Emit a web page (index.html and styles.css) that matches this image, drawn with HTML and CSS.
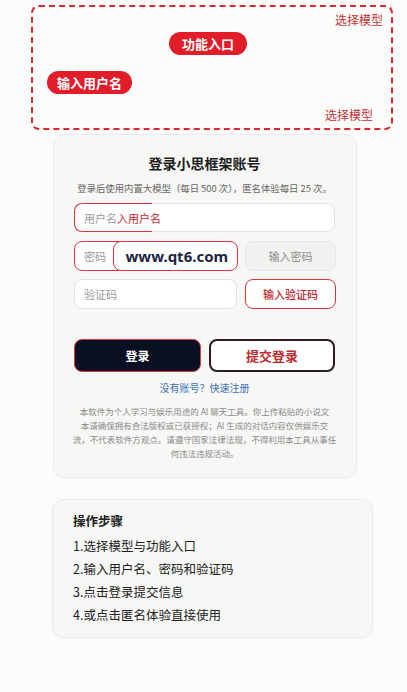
FILE: index.html
```html
<!DOCTYPE html>
<html lang="zh-CN">
<head>
<meta charset="utf-8">
<title>登录小思框架账号</title>
<link rel="stylesheet" href="styles.css">
</head>
<body>
<div class="page">
  <div class="hint-box">
    <span class="hint-label top">选择模型</span>
    <span class="pill pill-center">功能入口</span>
    <span class="pill pill-left">输入用户名</span>
    <span class="hint-label bottom">选择模型</span>
  </div>

  <div class="card login">
    <h1 class="title">登录小思框架账号</h1>
    <p class="sub">登录后使用内置大模型（每日 500 次），匿名体验每日 25 次。</p>

    <div class="field full">
      <span class="user-mark"></span>
      <span class="ph">用户名</span><span class="red-text">入用户名</span>
    </div>

    <div class="row">
      <div class="field pw">
        <span class="ph">密码</span>
        <span class="site">www.qt6.com</span>
      </div>
      <div class="side grey">输入密码</div>
    </div>

    <div class="row">
      <div class="field">
        <span class="ph">验证码</span>
      </div>
      <div class="side redline">输入验证码</div>
    </div>

    <div class="btns">
      <button class="btn dark">登录</button>
      <button class="btn light">提交登录</button>
    </div>

    <p class="reg">没有账号？快速注册</p>

    <p class="note">本软件为个人学习与娱乐用途的 AI 聊天工具。你上传粘贴的小说文<br>本请确保拥有合法版权或已获授权；AI 生成的对话内容仅供娱乐交<br>流，不代表软件方观点。请遵守国家法律法规，不得利用本工具从事任<br>何违法违规活动。</p>
  </div>

  <div class="card steps">
    <h2 class="steps-title">操作步骤</h2>
    <ol class="step-list">
      <li>1.选择模型与功能入口</li>
      <li>2.输入用户名、密码和验证码</li>
      <li>3.点击登录提交信息</li>
      <li>4.或点击匿名体验直接使用</li>
    </ol>
  </div>
</div>
</body>
</html>
```

FILE: styles.css
```css
* { box-sizing: border-box; }

html, body {
  margin: 0;
  padding: 0;
  background: #fcfcfb;
  font-family: "Noto Sans CJK SC", "Noto Sans", sans-serif;
  color: #222;
}

.page {
  width: 407px;
  height: 692px;
  padding-top: 5px;
  overflow: hidden;
}

/* dashed hint area */
.hint-box {
  margin-left: 31px;
  width: 362px;
  height: 125px;
  border: 2px dashed #d92a32;
  border-radius: 8px;
  padding: 6px 8px 6px 14px;
  display: flex;
  flex-direction: column;
  align-items: flex-start;
}

.hint-label {
  font-size: 12px;
  line-height: 14px;
  color: #c23236;
  align-self: flex-end;
}

.hint-label.bottom {
  margin-top: 14px;
  margin-right: 10px;
}

.pill {
  display: inline-block;
  background: #e11d2a;
  color: #fff;
  font-weight: 700;
  font-size: 13px;
  line-height: 23px;
  height: 23px;
  border-radius: 12px;
}

.pill-center {
  align-self: center;
  margin-top: 5px;
  margin-right: 14px;
  padding: 0 13px;
}

.pill-left {
  margin-top: 16px;
  padding: 0 10px;
}

/* cards */
.card {
  background: #f7f7f5;
  border: 1px solid #ebebe8;
  border-radius: 12px;
  box-shadow: 0 1px 3px rgba(0, 0, 0, 0.03);
}

.login {
  margin: 4px 0 0 53px;
  width: 304px;
  padding: 18px 21px 17px 20px;
}

.title {
  margin: 0;
  text-align: center;
  font-size: 14px;
  line-height: 20px;
  font-weight: 700;
  color: #1d1d1d;
}

.sub {
  margin: 8px -4px 0;
  font-size: 9.4px;
  line-height: 14px;
  color: #666;
  text-align: center;
  white-space: nowrap;
}

.field {
  position: relative;
  height: 30px;
  background: #fff;
  border: 1px solid #e2e2e0;
  border-radius: 8px;
  padding-left: 9px;
  display: flex;
  align-items: center;
  font-size: 11px;
}

.field.full {
  margin-top: 8px;
  height: 29px;
}

.user-mark {
  position: absolute;
  left: -1px;
  top: -1px;
  bottom: -1px;
  width: 78px;
  border: 1.5px solid #d6363c;
  border-right: none;
  border-radius: 8px 0 0 8px;
}

.ph { color: #9a9a9a; }
.red-text { color: #c9262c; }

.row {
  display: grid;
  grid-template-columns: 163px 91px;
  column-gap: 8px;
  margin-top: 8px;
}

.row + .row { margin-top: 8px; }
.field.full + .row { margin-top: 9px; }

.field.pw {
  border: 1.5px solid #d6363c;
}

.site {
  position: absolute;
  right: -1.5px;
  top: -1.5px;
  width: 125px;
  height: 30px;
  background: #fff;
  border: 1.5px solid #d6363c;
  border-radius: 8px;
  padding-left: 12px;
  display: flex;
  align-items: center;
  font-size: 15px;
  font-weight: 700;
  color: #1e2543;
  font-family: "Noto Sans", "Open Sans", sans-serif;
}

.side {
  height: 30px;
  border-radius: 8px;
  display: flex;
  align-items: center;
  justify-content: center;
  font-size: 11px;
}

.side.grey {
  background: #f1f1f0;
  border: 1px solid #e5e5e3;
  color: #8f8f8f;
}

.side.redline {
  background: #fff;
  border: 1.5px solid #d6363c;
  color: #c22a2f;
  font-weight: 500;
}

.btns {
  display: grid;
  grid-template-columns: 127px 126px;
  column-gap: 8px;
  margin-top: 30px;
}

.btn {
  height: 33px;
  border-radius: 8px;
  font-family: inherit;
  font-size: 12px;
  font-weight: 700;
  padding: 0;
}

.btn.dark {
  background: #0a1022;
  color: #fff;
  border: 1.5px solid #d8393e;
}

.btn.light {
  background: #fff;
  color: #c22a2f;
  border: 2px solid #2a1d1e;
  font-size: 13px;
}

.reg {
  margin: 9px 0 0;
  text-align: center;
  font-size: 10px;
  line-height: 14px;
  color: #3b73b6;
}

.note {
  margin: 9px -3px 0 -3px;
  text-align: center;
  font-size: 8.5px;
  line-height: 14px;
  color: #8a8a8a;
  white-space: nowrap;
}

/* steps */
.steps {
  margin: 21px 0 0 52px;
  width: 321px;
  padding: 13px 20px 11px 20px;
}

.steps-title {
  margin: 0;
  font-size: 12.5px;
  line-height: 16px;
  font-weight: 700;
  color: #1d1d1d;
}

.step-list {
  list-style: none;
  margin: 5px 0 0;
  padding: 0;
}

.step-list li {
  font-size: 12.5px;
  line-height: 23px;
  color: #222;
}
```
